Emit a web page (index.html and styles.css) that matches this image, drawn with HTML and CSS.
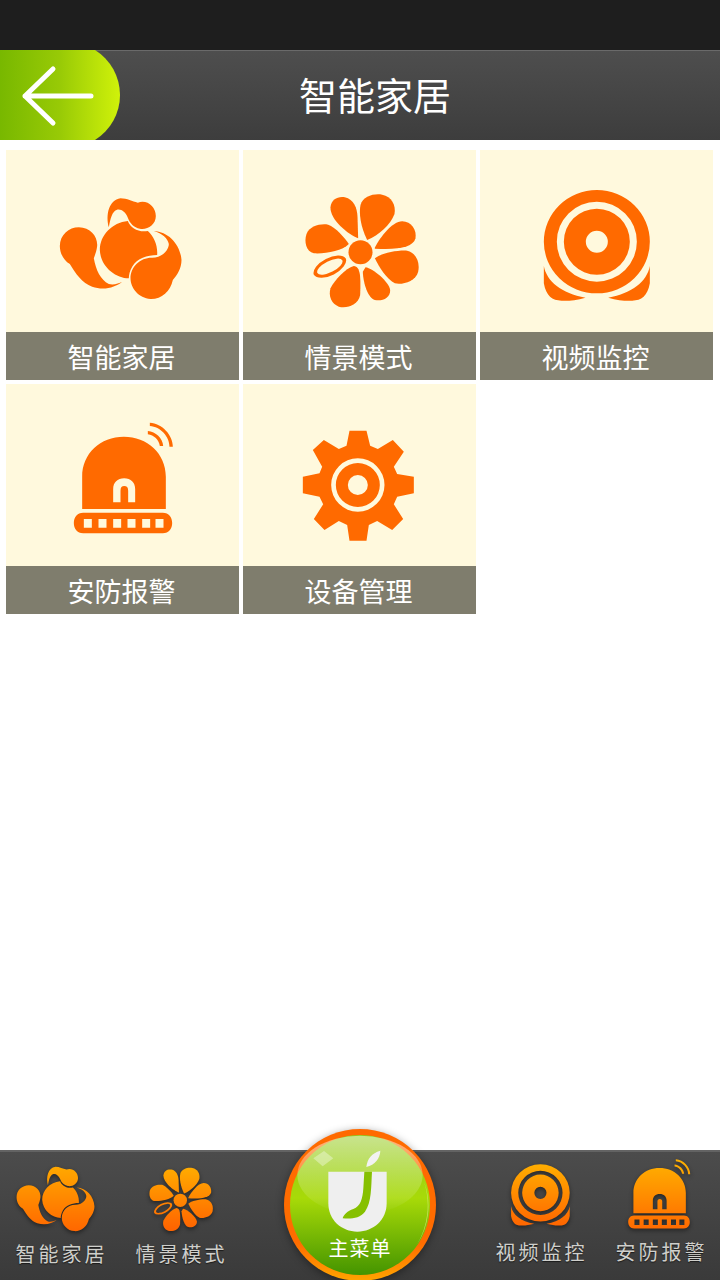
FILE: index.html
```html
<!DOCTYPE html>
<html lang="zh-CN">
<head>
    <meta charset="UTF-8">
    <meta name="viewport" content="width=device-width, initial-scale=1.0">
    <title>智能家居</title>
    <link rel="stylesheet" href="styles.css">
</head>
<body>
    <!-- shared icons, drawn once and reused in the grid and the tab bar -->
    <svg class="defs" aria-hidden="true">
        <defs>
            <linearGradient id="tabGrad" gradientUnits="userSpaceOnUse" x1="0" y1="50" x2="0" y2="400">
                <stop offset="0" stop-color="#ffb000"/>
                <stop offset="1" stop-color="#ff6400"/>
            </linearGradient>
            <linearGradient id="backGrad" x1="0" y1="0" x2="1" y2="0">
                <stop offset="0" stop-color="#78b800"/>
                <stop offset="0.5" stop-color="#98ca06"/>
                <stop offset="1" stop-color="#d0f20a"/>
            </linearGradient>
            <linearGradient id="ringGrad" x1="0" y1="0" x2="0" y2="1">
                <stop offset="0" stop-color="#ff6a00"/>
                <stop offset="0.75" stop-color="#ff6c00"/>
                <stop offset="1" stop-color="#ffa400"/>
            </linearGradient>
            <linearGradient id="ballGrad" x1="0" y1="0" x2="0" y2="1">
                <stop offset="0" stop-color="#92c81c"/>
                <stop offset="0.45" stop-color="#a8da08"/>
                <stop offset="1" stop-color="#449400"/>
            </linearGradient>
            <linearGradient id="glossGrad" x1="0" y1="0" x2="0" y2="1">
                <stop offset="0" stop-color="#fff" stop-opacity="0.5"/>
                <stop offset="0.6" stop-color="#fff" stop-opacity="0.2"/>
                <stop offset="1" stop-color="#fff" stop-opacity="0"/>
            </linearGradient>
        </defs>

        <symbol id="icon-home" viewBox="22.5 -12 450 450">
            <path d="M115,172 C150,172 172,200 170,228 C168,245 162,258 160,265 C166,300 180,330 205,342 C220,346 235,340 245,335 C225,352 190,362 155,350 C125,340 105,310 88,282 C70,272 58,250 58,228 C58,195 85,172 115,172 Z"/>
            <path d="M262,153 C270,175 295,188 322,183 C340,200 352,225 350,255 C320,255 290,265 275,290 C268,302 265,315 265,325 C225,325 180,290 178,240 C178,195 215,158 262,153 Z"/>
            <path d="M205,172 C195,135 205,90 240,85 C260,85 275,95 292,98 C320,88 346,110 346,138 C346,165 320,180 298,176 C280,172 268,160 262,143 C255,125 240,115 228,120 C215,125 210,145 205,172 Z"/>
            <path d="M340,183 C385,185 420,225 423,270 C423,295 410,315 397,330 C390,365 362,388 330,387 C295,385 270,355 270,325 C270,290 300,262 335,263 C365,263 385,240 385,222 C382,205 365,190 340,183 Z"/>
        </symbol>

        <symbol id="icon-scene" viewBox="-1.5 -12 450 450">
            <circle cx="225" cy="247" r="36"/>
            <path d="M218,205 C190,195 133,150 135,112 C137,88 158,78 178,82 C205,88 215,115 216,140 Z"/>
            <path d="M245,210 C225,170 220,130 225,105 C233,78 265,70 290,74 C318,80 332,105 327,132 C315,165 280,195 245,210 Z"/>
            <path d="M268,233 C285,200 320,155 350,154 C378,154 394,180 390,205 C383,232 340,240 268,236 Z"/>
            <path d="M268,265 C285,250 335,240 365,242 C392,248 404,278 398,305 C390,335 350,345 328,340 C305,330 280,290 268,265 Z"/>
            <path d="M240,292 C262,295 310,335 314,360 C315,385 290,394 268,390 C248,385 233,340 232,305 Z"/>
            <path d="M205,288 C225,290 226,320 224,375 C218,405 185,416 160,410 C138,402 128,378 135,355 C147,330 180,295 205,288 Z"/>
            <path d="M190,222 C170,243 120,252 85,250 C62,245 55,215 63,192 C72,168 105,160 128,164 C150,172 178,203 190,222 Z"/>
            <path fill-rule="evenodd" d="M181,265.5 A54,28 -27 0 0 85,314.5 A54,28 -27 0 0 181,265.5 Z M170.4,270.9 A42,17 -27 0 1 95.6,309.1 A42,17 -27 0 1 170.4,270.9 Z"/>
        </symbol>

        <symbol id="icon-camera" viewBox="-10.5 -12 450 450">
            <path fill-rule="evenodd" d="M55,215 a159,155 0 1,0 318,0 a159,155 0 1,0 -318,0 Z M94,215 a120,120 0 1,0 240,0 a120,120 0 1,0 -240,0 Z M115,215 a99,99 0 1,0 198,0 a99,99 0 1,0 -198,0 Z M181,215 a33,33 0 1,0 66,0 a33,33 0 1,0 -66,0 Z"/>
            <path d="M55,288 C64,335 108,370 180,383 C150,392 125,393 108,392 C80,392 62,378 55,340 Z"/>
            <path d="M373,288 C364,335 320,370 248,383 C278,392 303,393 320,392 C348,392 366,378 373,340 Z"/>
        </symbol>

        <symbol id="icon-alarm" viewBox="-7.5 -30 450 450">
            <path fill-rule="evenodd" d="M95,297 V200 C95,130 150,80 220,80 C290,80 346,130 346,200 V297 Z M188,277 H210 V242 C210,232 214,228 221,228 C229,228 233,232 233,242 V277 H254 V238 C254,217 241,205 221,205 C201,205 188,217 188,238 Z"/>
            <path fill-rule="evenodd" d="M98,308 H337 C355,308 365,322 365,339 C365,356 355,370 337,370 H98 C80,370 70,356 70,339 C70,322 80,308 98,308 Z M100,327 V353 H124 V327 Z M144,327 V353 H168 V327 Z M188,327 V353 H212 V327 Z M231,327 V353 H255 V327 Z M275,327 V353 H299 V327 Z M315,327 V353 H339 V327 Z"/>
            <path d="M298,38 C335,40 367,75 367,110 L357,110 C357,80 330,50 298,48 Z"/>
            <path d="M292,63 C315,65 337,85 338,108 L328,108 C326,90 310,75 292,73 Z"/>
        </symbol>

        <symbol id="icon-gear" viewBox="-1.5 -45 450 450">
            <path fill-rule="evenodd" d="M192,47 L243,47 L254,92 L277,102 L322,75 L355,110 L325,155 L335,177 L385,185 L385,235 L335,245 L325,268 L353,312 L320,345 L275,318 L250,330 L243,377 L192,377 L185,330 L160,318 L117,345 L85,312 L113,268 L102,245 L52,235 L52,185 L102,175 L110,155 L82,105 L115,75 L160,102 L183,92 Z M137,210 a80,80 0 1,0 160,0 a80,80 0 1,0 -160,0 Z M151,210 a66,66 0 1,0 132,0 a66,66 0 1,0 -132,0 Z M187,210 a30,30 0 1,0 60,0 a30,30 0 1,0 -60,0 Z"/>
        </symbol>
    </svg>

    <div class="status-bar"></div>

    <header class="header">
        <a class="back" href="#" aria-label="返回">
            <svg width="120" height="90" viewBox="0 0 120 90">
                <path d="M0,0 H95 A53,53 0 0 1 95,90 H0 Z" fill="url(#backGrad)"/>
                <path d="M91,46 H25 M53,19 L25,46 L53,73" fill="none" stroke="#fff" stroke-width="5" stroke-linecap="round" stroke-linejoin="round"/>
            </svg>
        </a>
        <h1 class="title">智能家居</h1>
    </header>

    <main class="grid">
        <a class="cell" href="#">
            <span class="cell-icon"><svg class="icon" width="150" height="150"><use href="#icon-home"/></svg></span>
            <span class="cell-label">智能家居</span>
        </a>
        <a class="cell" href="#">
            <span class="cell-icon"><svg class="icon" width="150" height="150"><use href="#icon-scene"/></svg></span>
            <span class="cell-label">情景模式</span>
        </a>
        <a class="cell" href="#">
            <span class="cell-icon"><svg class="icon" width="150" height="150"><use href="#icon-camera"/></svg></span>
            <span class="cell-label">视频监控</span>
        </a>
        <a class="cell" href="#">
            <span class="cell-icon"><svg class="icon" width="150" height="150"><use href="#icon-alarm"/></svg></span>
            <span class="cell-label">安防报警</span>
        </a>
        <a class="cell" href="#">
            <span class="cell-icon"><svg class="icon" width="150" height="150"><use href="#icon-gear"/></svg></span>
            <span class="cell-label">设备管理</span>
        </a>
    </main>

    <nav class="tabbar">
        <a class="tab" href="#">
            <span class="tab-icon"><svg class="tab-svg tab-svg-home" width="96" height="96" fill="url(#tabGrad)"><use href="#icon-home"/></svg></span>
            <span class="tab-label">智能家居</span>
        </a>
        <a class="tab" href="#">
            <span class="tab-icon"><svg class="tab-svg" width="84" height="84" fill="url(#tabGrad)"><use href="#icon-scene"/></svg></span>
            <span class="tab-label">情景模式</span>
        </a>
        <span class="tab-gap"></span>
        <a class="tab tab-right" href="#">
            <span class="tab-icon"><svg class="tab-svg" width="83" height="83" fill="url(#tabGrad)"><use href="#icon-camera"/></svg></span>
            <span class="tab-label">视频监控</span>
        </a>
        <a class="tab tab-right" href="#">
            <span class="tab-icon"><svg class="tab-svg tab-svg-alarm" width="94" height="94" fill="url(#tabGrad)"><use href="#icon-alarm"/></svg></span>
            <span class="tab-label">安防报警</span>
        </a>

        <a class="menu-btn" href="#">
            <svg width="160" height="160" viewBox="30 0 480 480">
                <circle cx="270" cy="240" r="228" fill="url(#ringGrad)"/>
                <circle cx="270" cy="240" r="210" fill="url(#ballGrad)"/>
                <ellipse cx="270" cy="150" rx="188" ry="118" fill="url(#glossGrad)"/>
                <path d="M130,100 L162,78 L190,100 L158,124 Z" fill="#fff" opacity="0.35"/>
                <path d="M440,360 A210,210 0 0 0 462,170 A230,230 0 0 1 440,360 Z" fill="#e4f4a0" opacity="0.6"/>
                <path d="M175,140 H350 V235 C350,285 310,320 262,320 C214,320 175,285 175,235 Z" fill="#efefef"/>
                <path d="M283,140 H306 C303,190 305,230 285,260 C270,280 245,282 218,280 C222,268 232,258 250,252 C272,245 278,220 280,190 Z" fill="#86c000"/>
                <path d="M289,126 C292,100 305,85 331,77 C330,100 315,120 289,126 Z" fill="#f2f2f2"/>
            </svg>
            <span class="menu-label">主菜单</span>
        </a>
    </nav>
</body>
</html>
```

FILE: styles.css
```css
html, body {
    margin: 0;
    padding: 0;
    height: 100%;
    overflow: hidden;
    background: #fff;
    font-family: "Noto Sans CJK SC", "Noto Sans", sans-serif;
}

body {
    display: flex;
    flex-direction: column;
    height: 1280px;
}

a {
    color: inherit;
    text-decoration: none;
}

.defs {
    position: absolute;
    width: 0;
    height: 0;
}

.status-bar {
    height: 50px;
    background: #1e1e1e;
}

.header {
    display: flex;
    align-items: center;
    height: 90px;
    background: linear-gradient(#4e4e4e, #3d3d3d);
    box-shadow: inset 0 1px 0 #6a6a6a;
}

.back {
    display: block;
    width: 120px;
    height: 90px;
}

.back svg {
    display: block;
}

.title {
    flex: 1;
    margin: 0 0 2px;
    padding-right: 90px;
    text-align: center;
    color: #fff;
    font-size: 38px;
    font-weight: 400;
    line-height: 88px;
}

.grid {
    flex: 1;
    display: grid;
    grid-template-columns: repeat(3, 233px);
    grid-auto-rows: 230px;
    gap: 4px;
    align-content: start;
    padding: 10px 0 0 6px;
}

.cell {
    display: flex;
    flex-direction: column;
    background: #fff9dd;
}

.cell-icon {
    flex: 1;
    display: flex;
    align-items: center;
    justify-content: center;
}

.icon {
    fill: #ff6a00;
}

.cell-label {
    height: 48px;
    padding-right: 2px;
    background: #7f7d6d;
    color: #fff;
    font-size: 27px;
    line-height: 50px;
    text-align: center;
}

.tabbar {
    position: relative;
    display: grid;
    grid-template-columns: 120px 120px 1fr 120px 120px;
    height: 130px;
    background: linear-gradient(#4c4c4c, #3a3a3a);
    box-shadow: inset 0 2px 0 #636363;
}

.tab {
    display: flex;
    flex-direction: column;
    align-items: center;
}

.tab-right {
    margin-top: -2px;
}

.tab-icon {
    display: flex;
    align-items: center;
    justify-content: center;
    height: 88px;
    width: 100%;
}

.tab-svg {
    flex: none;
    filter: drop-shadow(0 2px 2px rgba(0, 0, 0, 0.45));
}

.tab-svg-home {
    margin-right: 6px;
}

.tab-svg-alarm {
    margin-right: 3px;
}

.tab-label {
    margin-top: 1px;
    padding-left: 3px;
    color: #cfcfcb;
    font-size: 20px;
    letter-spacing: 3px;
    line-height: 30px;
    text-shadow: 0 1px 1px rgba(0, 0, 0, 0.6);
}

.menu-btn {
    position: absolute;
    left: 280px;
    top: -25px;
    width: 160px;
    height: 160px;
}

.menu-btn svg {
    display: block;
    filter: drop-shadow(0 2px 4px rgba(0, 0, 0, 0.4));
}

.menu-label {
    position: absolute;
    left: 0;
    right: 0;
    top: 108px;
    color: #fff;
    font-size: 20px;
    letter-spacing: 1px;
    line-height: 30px;
    text-align: center;
}
```
